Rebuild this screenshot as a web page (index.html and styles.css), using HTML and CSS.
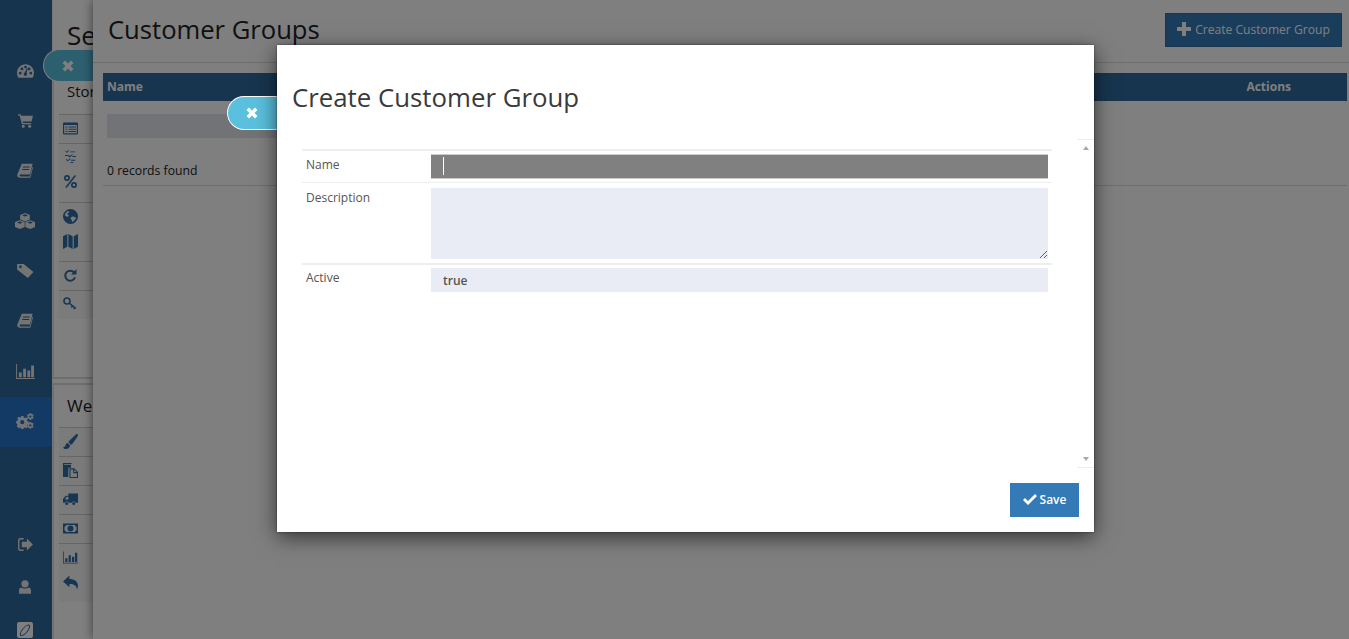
FILE: index.html
```html
<!DOCTYPE html>
<html lang="en">
<head>
<meta charset="utf-8">
<title>Customer Groups</title>
<link rel="stylesheet" href="styles.css">
</head>
<body>
<svg class="defs" width="0" height="0" aria-hidden="true">
  <symbol id="i-gauge" viewBox="0 0 24 19"><path fill-rule="evenodd" d="M12 0C5.400 0 0 5.400 0 12c0 2.600.7 5 2 7h20c1.300-2 2-4.400 2-7C24 5.400 18.600 0 12 0zM4.500 14.500a2 2 0 1 1 0-4 2 2 0 0 1 0 4zm2.500-6a2 2 0 1 1 0-4 2 2 0 0 1 0 4zM12 6a2 2 0 1 1 0-4 2 2 0 0 1 0 4zm0 10.500a2.500 2.500 0 0 1-1-4.800L14 5.500l1 .4-1.500 6.500a2.500 2.500 0 0 1-1.500 4.100zm7.500-2a2 2 0 1 1 0-4 2 2 0 0 1 0 4zM17 8.500a2 2 0 1 1 0-4 2 2 0 0 1 0 4z"/></symbol>
  <symbol id="i-cart" viewBox="0 0 20 18"><path d="M0 0h3.500l.6 2H20l-2 7.500H6.300l.4 2H17.500v1.800H5.200L2.200 1.800H0z"/><circle cx="7" cy="16" r="2"/><circle cx="15.500" cy="16" r="2"/></symbol>
  <symbol id="i-book" viewBox="0 0 20 20"><path fill-rule="evenodd" d="M6 1h13.500l-3.400 13.500H4.600c-1 0-1.400.6-1.300 1.300.1.600.6 1 1.400 1H16l3.200-12 .8.700-3.400 13H4c-2.300 0-4-1.500-3.700-3.800zM7.500 4.500l-.3 1.200h8.600l.3-1.200zM6.700 7.500l-.3 1.200H15l.3-1.200z"/></symbol>
  <symbol id="i-cubes" viewBox="0 0 24 19"><path fill-rule="evenodd" d="M12 0l5.800 2.200v5.600L12 10 6.200 7.800V2.200zM12 1.500L8.600 2.800 12 4.100l3.400-1.300z"/><path fill-rule="evenodd" d="M5.800 8.600l5.800 2.200v5.800L5.800 19 0 16.600v-5.800zM5.800 10.100L2.400 11.400l3.400 1.300 3.400-1.300z"/><path fill-rule="evenodd" d="M18.200 8.600L24 10.800v5.800L18.200 19l-5.800-2.400v-5.800zM18.200 10.100l-3.400 1.300 3.400 1.300 3.400-1.300z"/></symbol>
  <symbol id="i-tag" viewBox="0 0 18 15"><path fill-rule="evenodd" d="M0 0h7l10.500 8.500-6 6.500L0 6zm3.500 4.500a1.500 1.500 0 1 0 0-3 1.500 1.500 0 0 0 0 3z"/></symbol>
  <symbol id="i-chart" viewBox="0 0 20 16"><path d="M0 0h1v15h19v1H0z"/><path d="M3 9h3v5H3zM7.500 5H10.500v9h-3zM12 7h3v7h-3zM16 1.500h3V14h-3z"/></symbol>
  <symbol id="i-cogs" viewBox="0 0 20 18"><path fill-rule="evenodd" d="M5.600 3.500h2.600l.4 1.600 1.200.5 1.400-.9 1.900 1.900-.9 1.400.5 1.200 1.600.4v2.600l-1.600.4-.5 1.200.9 1.400-1.900 1.900-1.400-.9-1.200.5-.4 1.600H5.600l-.4-1.600-1.200-.5-1.400.9L.7 14.600l.9-1.400-.5-1.200L0 11.600V9l1.600-.4.500-1.200-.9-1.400 1.900-1.900 1.400.9 1.200-.5zm1.300 4.400a2.400 2.400 0 1 0 0 4.800 2.400 2.400 0 0 0 0-4.800z"/><path fill-rule="evenodd" d="M15.200 0h1.600l.3 1.100 1.100.5 1-.5.500 1.400-.8.800v1.200l.8.800-.5 1.400-1-.5-1.100.5-.3 1.100h-1.600l-.3-1.100-1.100-.5-1 .5-.5-1.400.8-.8V3.300l-.8-.8.5-1.400 1 .5 1.100-.5zM16 2.700a1.300 1.300 0 1 0 0 2.600 1.300 1.300 0 0 0 0-2.600z"/><path fill-rule="evenodd" d="M15.200 10h1.600l.3 1.100 1.100.5 1-.5.500 1.400-.8.800v1.200l.8.800-.5 1.400-1-.5-1.100.5-.3 1.100h-1.600l-.3-1.100-1.100-.5-1 .5-.5-1.400.8-.8v-1.200l-.8-.8.5-1.400 1 .5 1.100-.5zM16 12.700a1.300 1.300 0 1 0 0 2.600 1.300 1.300 0 0 0 0-2.600z"/></symbol>
  <symbol id="i-signout" viewBox="0 0 16 14"><path d="M6 0H2.500A2.500 2.500 0 0 0 0 2.500v9A2.500 2.500 0 0 0 2.500 14H6v-1.500H3A1.500 1.500 0 0 1 1.500 11V3A1.500 1.500 0 0 1 3 1.500h3z"/><path d="M9.500 .5L16 7l-6.500 6.500V10H4V4h5.500z"/></symbol>
  <symbol id="i-user" viewBox="0 0 14 16"><circle cx="7" cy="4.300" r="4.300"/><path d="M0 16v-4c0-2 1.500-3.500 3-3.500.9.700 2.400 1.300 4 1.300s3.100-.6 4-1.300c1.500 0 3 1.500 3 3.500v4z"/></symbol>
  <symbol id="i-logo" viewBox="0 0 16 16"><path fill-rule="evenodd" d="M2 0h12a2 2 0 0 1 2 2v12a2 2 0 0 1-2 2H2a2 2 0 0 1-2-2V2a2 2 0 0 1 2-2zm9.500 2.500C8.500 2.500 4 8 3 11.500c-.5 1.800.3 2.500 1.500 2.500 3 0 7.500-5 8.500-8.500.5-1.800-.3-3-1.500-3zm-.4 1c.9 0 1.200.9.800 2.200-.9 2.800-4.700 7.200-7.200 7.200-.9 0-1-.7-.7-1.800C4.900 8.200 8.700 3.500 11.100 3.500z"/><path d="M10.700 3.800l.6.300L5.600 13l-.6-.3z"/></symbol>
  <symbol id="i-list" viewBox="0 0 15 12"><path fill-rule="evenodd" d="M1 0h13a1 1 0 0 1 1 1v10a1 1 0 0 1-1 1H1a1 1 0 0 1-1-1V1a1 1 0 0 1 1-1zm.200 2.500v8.300h12.600V2.500zM2.500 4h2v1.100h-2zm3 0h7.500v1.100H5.500zm-3 2.200h2v1.100h-2zm3 0h7.500v1.100H5.500zm-3 2.200h2v1.100h-2zm3 0h7.500v1.100H5.500z"/></symbol>
  <symbol id="i-tasks" viewBox="0 0 12 14"><path d="M1 .5L2 2l2-2 .6.500L2 3.300.4 1zM5.500 1.500H11v1H5.500zM0 5.500h4l1 1 3-2 .6.700L5 8 3.500 6.500H0zM8 6.500h4v1H8zM1.500 9.500L3 11l2.500-2 .6.600L3 12.500 1 10zM6.500 10.500H11v1H6.500zM6 13h3v1H6z"/></symbol>
  <symbol id="i-percent" viewBox="0 0 13 13"><path fill-rule="evenodd" d="M3 0a3 3 0 1 1 0 6 3 3 0 0 1 0-6zm0 1.700a1.300 1.300 0 1 0 0 2.600 1.300 1.300 0 0 0 0-2.600zM10 7a3 3 0 1 1 0 6 3 3 0 0 1 0-6zm0 1.700a1.300 1.300 0 1 0 0 2.600 1.300 1.300 0 0 0 0-2.600zM10.300 .5h2L3 12.500H1z"/></symbol>
  <symbol id="i-globe" viewBox="0 0 14 14"><path fill-rule="evenodd" d="M7 0a7 7 0 1 1 0 14A7 7 0 0 1 7 0zM4 2C2.700 3 1.800 4.500 1.700 6c1 .2 1.300 1 2.300 1.200.7.100 1.800-.6 1.300-1.400C5 5 4 5.500 3.800 4.700 3.700 4 5.500 3.800 5.800 3c.2-.6-.6-1-1.800-1zm5.500 5c-1 0-2 .6-2.500 1.500-.4.800 1 1.300 1.300 2 .2.600-.2 1.200.2 1.700C10.300 11.500 12 9.500 12.300 8c-.9 0-1.800-1-2.800-1z"/></symbol>
  <symbol id="i-map" viewBox="0 0 14 14"><path d="M0 2l4-2v12l-4 2zM5 0l4 2v12l-4-2zM10 2l4-2v12l-4 2z"/></symbol>
  <symbol id="i-repeat" viewBox="0 0 14 14"><path d="M11.200 4.600A5 5 0 1 0 12 9.300" fill="none" stroke-width="2" stroke="currentColor"/><path d="M13.500 1v5.500H8z"/></symbol>
  <symbol id="i-key" viewBox="0 0 14 14"><circle cx="4" cy="4" r="3" fill="none" stroke="currentColor" stroke-width="1.600"/><path d="M6.200 6.200L13 11.500M9.500 9l-1.200 1.500M11.700 10.500l-1 1.500" fill="none" stroke="currentColor" stroke-width="1.500"/></symbol>
  <symbol id="i-brush" viewBox="0 0 14 14"><path d="M13 0c.6 0 1 .4 1 1 0 .6-.5 1.400-1.200 2.500L9 8.800c-.4.700-1 1.200-1.500 1.200L5 7.600c.2-.7.700-1.300 1.300-1.800L11.500 1C12 .4 12.500 0 13 0zM4.300 8.300L6.700 10.600C6.600 12.800 4.800 14 3 14 1.300 14 .2 13.200 0 12.300c.9 0 1.700-.3 2-1.200.4-1.400 1-2.600 2.300-2.800z"/></symbol>
  <symbol id="i-files" viewBox="0 0 14 14"><path d="M0 0h8v1H1v.7h6.500V4.500H5V13H0z"/><path fill-rule="evenodd" d="M6 5h4.500L14 8.500V14H6zm1 1v7h6V9.500H9.500V6zm3.500.2V8.500h2.300z"/></symbol>
  <symbol id="i-truck" viewBox="0 0 14 11"><path fill-rule="evenodd" d="M5 0h9v8.500h-2.200a2 2 0 0 0-3.600 0H5.300a2 2 0 0 0-3.600 0H0V5l2.500-3H5zM2 5.500h3V3H3.700L2 4.700z"/><circle cx="3.500" cy="9.300" r="1.400"/><circle cx="10" cy="9.300" r="1.400"/></symbol>
  <symbol id="i-money" viewBox="0 0 15 10"><path fill-rule="evenodd" d="M0 0h15v10H0zm3 1.500C3 2.500 2.500 3 1.500 3v4c1 0 1.500.5 1.500 1.500h9c0-1 .5-1.500 1.500-1.500V3c-1 0-1.500-.5-1.500-1.500zM7.500 2a3 3 0 1 1 0 6 3 3 0 0 1 0-6z"/><path d="M6.800 3.400h1.100V6.400h.6v.6H6.500v-.6h.6V4.400l-.6.300z"/></symbol>
  <symbol id="i-reply" viewBox="0 0 14 13"><path d="M6 0v3.200c4.500 0 8 2.300 8 6.300 0 1.300-.4 2.500-1 3.500.1-3.200-2.700-5-7-5V11L0 5.500z"/></symbol>
  <symbol id="i-plus" viewBox="0 0 14 14"><path d="M5 0h4v5h5v4H9v5H5V9H0V5h5z"/></symbol>
  <symbol id="i-check" viewBox="0 0 14 11"><path d="M5 11L0 6l2-2 3 3 7-7 2 2z"/></symbol>
  <symbol id="i-times" viewBox="0 0 12 12"><path d="M3 .5L6 3.500 9 .5 11.500 3 8.500 6l3 3L9 11.500l-3-3-3 3L.5 9l3-3-3-3z"/></symbol>
</svg>

<div class="app">
  <nav class="rail">
    <div class="rail-main">
      <a class="rail-item"><svg class="ri ri-gauge"><use href="#i-gauge"/></svg></a>
      <a class="rail-item"><svg class="ri ri-cart"><use href="#i-cart"/></svg></a>
      <a class="rail-item"><svg class="ri ri-book"><use href="#i-book"/></svg></a>
      <a class="rail-item"><svg class="ri ri-cubes"><use href="#i-cubes"/></svg></a>
      <a class="rail-item"><svg class="ri ri-tag"><use href="#i-tag"/></svg></a>
      <a class="rail-item"><svg class="ri ri-book"><use href="#i-book"/></svg></a>
      <a class="rail-item"><svg class="ri ri-chart"><use href="#i-chart"/></svg></a>
      <a class="rail-item rail-active"><svg class="ri ri-cogs"><use href="#i-cogs"/></svg></a>
    </div>
    <div class="rail-foot">
      <a class="foot-item"><svg class="fi fi-out"><use href="#i-signout"/></svg></a>
      <a class="foot-item"><svg class="fi fi-user"><use href="#i-user"/></svg></a>
      <a class="foot-item"><svg class="fi fi-logo"><use href="#i-logo"/></svg></a>
    </div>
  </nav>

  <section class="settings">
    <h1 class="settings-title">Se</h1>
    <div class="card card-store">
      <h2 class="card-title">Stor</h2>
      <ul class="menu">
        <li class="menu-row"><svg class="mi"><use href="#i-list"/></svg></li>
        <li class="menu-row menu-tall menu-wide">
          <svg class="mi mi-s"><use href="#i-tasks"/></svg>
          <svg class="mi mi-s"><use href="#i-percent"/></svg>
        </li>
        <li class="menu-row menu-tall">
          <svg class="mi"><use href="#i-globe"/></svg>
          <svg class="mi"><use href="#i-map"/></svg>
        </li>
        <li class="menu-row"><svg class="mi mi-m"><use href="#i-repeat"/></svg></li>
        <li class="menu-row"><svg class="mi mi-m"><use href="#i-key"/></svg></li>
      </ul>
    </div>
    <div class="card card-web">
      <h2 class="card-title">We</h2>
      <ul class="menu">
        <li class="menu-row"><svg class="mi"><use href="#i-brush"/></svg></li>
        <li class="menu-row"><svg class="mi"><use href="#i-files"/></svg></li>
        <li class="menu-row"><svg class="mi"><use href="#i-truck"/></svg></li>
        <li class="menu-row"><svg class="mi"><use href="#i-money"/></svg></li>
        <li class="menu-row menu-tall">
          <svg class="mi"><use href="#i-chart"/></svg>
          <svg class="mi"><use href="#i-reply"/></svg>
        </li>
      </ul>
    </div>
  </section>
</div>

<button class="tab tab-back" type="button"><svg class="tab-x"><use href="#i-times"/></svg></button>

<section class="groups">
  <header class="groups-head">
    <h1 class="groups-title">Customer Groups</h1>
    <button class="create-btn" type="button"><svg class="plus"><use href="#i-plus"/></svg>Create Customer Group</button>
  </header>
  <div class="grid">
    <div class="grid-head"><span>Name</span><span class="grid-actions">Actions</span></div>
    <div class="grid-filter"></div>
    <div class="grid-foot">0 records found</div>
  </div>
</section>

<div class="scrim"></div>

<button class="tab tab-front" type="button"><svg class="tab-x"><use href="#i-times"/></svg></button>

<div class="modal">
  <h2 class="modal-title">Create Customer Group</h2>
  <div class="modal-body">
    <div class="form-area">
      <div class="form">
        <div class="form-row row-name">
          <label class="form-label">Name</label>
          <div class="field-wrap"><input class="field field-focus" type="text"><span class="caret"></span></div>
        </div>
        <div class="form-row row-desc">
          <label class="form-label">Description</label>
          <textarea class="field field-area"></textarea>
        </div>
        <div class="form-row row-active">
          <label class="form-label">Active</label>
          <input class="field field-value" type="text" value="true">
        </div>
      </div>
    </div>
    <div class="scrollbar"><span class="arrow-up"></span><span class="arrow-down"></span></div>
  </div>
  <div class="modal-foot">
    <button class="save-btn" type="button"><svg class="check"><use href="#i-check"/></svg>Save</button>
  </div>
</div>
</body>
</html>
```

FILE: styles.css
```css
* { box-sizing: border-box; }
html, body { margin: 0; height: 100%; }
body {
  position: relative;
  width: 1349px;
  height: 639px;
  overflow: hidden;
  background: #fff;
  font-family: "Open Sans", "Liberation Sans", sans-serif;
  color: #333;
}
.defs { position: absolute; }
h1, h2, ul { margin: 0; padding: 0; font-weight: 400; }
ul { list-style: none; }
button { font-family: inherit; border: 0; padding: 0; }

.app { display: flex; height: 639px; }

.rail {
  width: 52px;
  flex: none;
  background: #2e689d;
  display: flex;
  flex-direction: column;
  justify-content: space-between;
  padding-top: 47px;
}
.rail-main { display: flex; flex-direction: column; }
.rail-item { display: flex; align-items: center; justify-content: center; height: 50px; padding: 0 2px 2px 0; }
.rail-active { background: #2574c9; }
.ri { fill: #e8e8e8; }
.ri-gauge { width: 17px; height: 14px; }
.ri-cart { width: 15px; height: 14px; }
.ri-book { width: 16px; height: 16px; }
.ri-cubes { width: 20px; height: 16px; }
.ri-tag { width: 17px; height: 14px; }
.ri-chart { width: 19px; height: 15px; }
.ri-cogs { width: 18px; height: 16px; }
.rail-foot { display: flex; flex-direction: column; gap: 27px; padding-bottom: 1px; }
.foot-item { display: flex; align-items: center; justify-content: center; height: 16px; padding-right: 2px; }
.fi { fill: #e8e8e8; }
.fi-out { width: 15px; height: 13px; }
.fi-user { width: 12px; height: 14px; }
.fi-logo { width: 16px; height: 16px; fill: #fff; }

.settings { width: 41px; flex: none; border-left: 1px solid #eee; }
.settings-title { font-size: 26px; line-height: 36px; margin: 17px 0 0 14px; color: #222; white-space: nowrap; }
.card { padding-left: 5px; border-left: 1px solid #ddd; }
.card-store { height: 326px; padding-top: 27px; border-bottom: 2px solid #ddd; }
.card-web { height: 256px; margin-top: 4px; padding-top: 3px; border-top: 2px solid #ddd; }
.card-title { line-height: 23px; margin-left: 8px; color: #222; white-space: nowrap; }
.card-store .card-title { font-size: 15px; margin-bottom: 11px; }
.card-web .card-title { font-size: 17px; margin-top: 6px; margin-bottom: 10px; }
.menu { background: #f7f7f7; }
.menu-row {
  display: flex;
  flex-direction: column;
  align-items: flex-start;
  gap: 10px;
  padding: 6px 0 0 4px;
  height: 29px;
  border-top: 1px solid #ccc;
}
.menu-tall { height: 59px; }
.menu-wide { gap: 12px; }
.mi { width: 15px; height: 15px; fill: #2f6da8; color: #2f6da8; display: block; }
.mi-s { width: 13px; height: 13px; margin-left: 1px; }
.mi-m { width: 14px; height: 14px; }

.tab {
  position: absolute;
  width: 50px;
  display: flex;
  align-items: center;
  padding-left: 18px;
  background: #5bc0de;
  border: 1px solid #fff;
  border-right: 0;
  border-radius: 17px 0 0 17px;
}
.tab-back { left: 43px; top: 49px; height: 33px; z-index: 1; }
.tab-front { left: 227px; top: 96px; height: 34px; z-index: 4; }
.tab-x { width: 12px; height: 12px; fill: #fff; }

.groups {
  position: absolute;
  left: 93px;
  top: 0;
  width: 1256px;
  height: 639px;
  background: #fff;
  box-shadow: 0 0 10px rgba(0, 0, 0, .55);
  z-index: 2;
}
.groups-head {
  height: 63px;
  padding: 13px 7px 0 15px;
  display: flex;
  justify-content: space-between;
  border-bottom: 1px solid #ddd;
}
.groups-title { font-size: 25.6px; line-height: 36px; margin-top: -1px; color: #222; }
.create-btn {
  width: 177px;
  height: 34px;
  background: #337ab7;
  color: #fff;
  font-size: 12.1px;
  display: flex;
  align-items: center;
  justify-content: center;
  gap: 4px;
  padding-bottom: 2px;
  box-shadow: inset 0 0 0 1px #2e6da4;
}
.plus { width: 14px; height: 14px; fill: #fff; }

.grid { margin: 10px 2px 0 10px; border-bottom: 1px solid #ddd; height: 113px; }
.grid-head {
  height: 28px;
  background: #2e6a9f;
  color: #fff;
  font-size: 12px;
  font-weight: 700;
  line-height: 27px;
  padding: 0 0 0 4px;
  display: flex;
  justify-content: space-between;
}
.grid-actions { margin-right: 56px; }
.grid-filter { height: 24px; width: 300px; margin: 13px 0 0 4px; background: #e4e7ee; }
.grid-foot { margin: 24px 0 0 4px; font-size: 12.2px; line-height: 18px; color: #222; font-weight: 500; }

.scrim {
  position: absolute;
  inset: 0;
  background: rgba(0, 0, 0, .5);
  z-index: 3;
}

.modal {
  position: absolute;
  left: 277px;
  top: 45px;
  width: 817px;
  height: 487px;
  background: #fff;
  box-shadow: 0 5px 20px rgba(0, 0, 0, .6), 0 0 2px rgba(0, 0, 0, .5);
  z-index: 5;
  display: flex;
  flex-direction: column;
}
.modal-title { font-size: 25.8px; line-height: 36px; margin: 34px 0 0 15px; color: #3a3a3a; height: 60px; }
.modal-body { display: flex; height: 329px; }
.form-area { flex: 1; padding: 10px 25px 0 25px; }
.form-row { display: grid; grid-template-columns: 129px 617px; border-top: 1px solid #eee; }
.form-label { font-size: 12px; line-height: 17px; padding-left: 4px; color: #555; }
.row-name { height: 33px; border-top-width: 2px; padding-top: 3px; }
.row-desc { height: 81px; padding-top: 5px; }
.row-active { height: 30px; border-top-width: 2px; padding-top: 3px; }
.row-name .form-label { padding-top: 2px; }
.row-desc .form-label { padding-top: 1px; }
.row-active .form-label { padding-top: 1px; }
.field-wrap { position: relative; }
.field {
  display: block;
  width: 617px;
  margin: 0;
  border: 0;
  outline: 0;
  background: #e9ecf5;
  font-family: inherit;
  font-size: 12px;
  font-weight: 600;
  color: #555;
  padding: 0 12px;
}
.field-focus { height: 25px; background: #808080; border-top: 1px solid #ccc; border-bottom: 1px solid #ccc; }
.caret { position: absolute; left: 12px; top: 3px; width: 1px; height: 18px; background: #fff; }
.field-area { height: 71px; resize: both; }
.field-value { height: 24px; }

.scrollbar {
  width: 17px;
  flex: none;
  border-top: 1px solid #eee;
  border-bottom: 1px solid #eee;
  display: flex;
  flex-direction: column;
  justify-content: space-between;
  align-items: center;
  padding: 6px 0 6px;
}
.arrow-up { border: 3.5px solid transparent; border-top: 0; border-bottom: 4px solid #a8a8a8; }
.arrow-down { border: 3.5px solid transparent; border-bottom: 0; border-top: 4px solid #a8a8a8; }

.modal-foot { display: flex; justify-content: flex-end; padding: 15px 15px 0 0; }
.save-btn {
  width: 69px;
  height: 34px;
  background: #337ab7;
  color: #fff;
  font-size: 12px;
  font-weight: 600;
  display: flex;
  align-items: center;
  justify-content: center;
  gap: 3px;
  padding-bottom: 1px;
}
.check { width: 14px; height: 11px; fill: #fff; }
```
